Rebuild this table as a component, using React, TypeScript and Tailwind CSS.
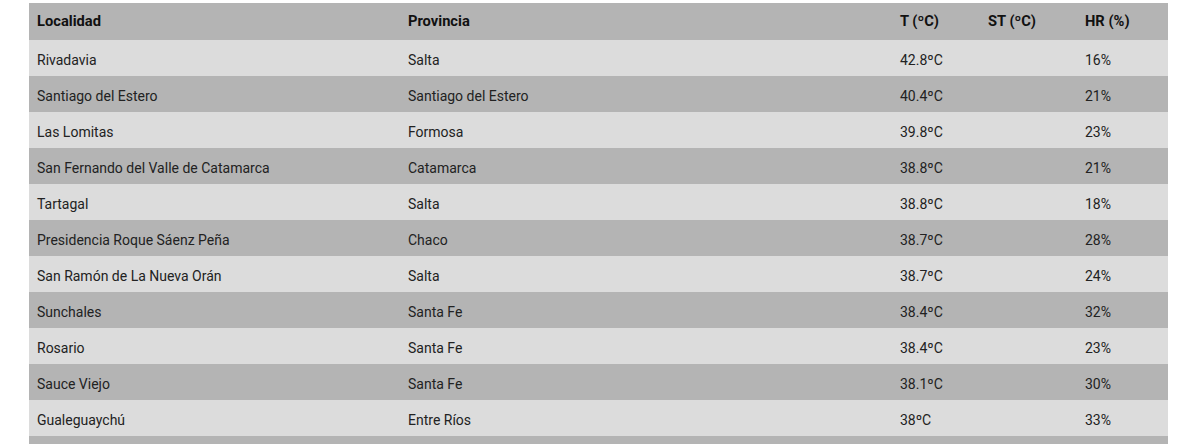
const rows = [
  ['Rivadavia', 'Salta', '42.8ºC', '', '16%'],
  ['Santiago del Estero', 'Santiago del Estero', '40.4ºC', '', '21%'],
  ['Las Lomitas', 'Formosa', '39.8ºC', '', '23%'],
  ['San Fernando del Valle de Catamarca', 'Catamarca', '38.8ºC', '', '21%'],
  ['Tartagal', 'Salta', '38.8ºC', '', '18%'],
  ['Presidencia Roque Sáenz Peña', 'Chaco', '38.7ºC', '', '28%'],
  ['San Ramón de La Nueva Orán', 'Salta', '38.7ºC', '', '24%'],
  ['Sunchales', 'Santa Fe', '38.4ºC', '', '32%'],
  ['Rosario', 'Santa Fe', '38.4ºC', '', '23%'],
  ['Sauce Viejo', 'Santa Fe', '38.1ºC', '', '30%'],
  ['Gualeguaychú', 'Entre Ríos', '38ºC', '', '33%'],
  // next row only peeks in at the bottom edge
  ['', '', '', '', ''],
];

export default function App() {
  return (
    <div className="h-[444px] overflow-hidden bg-white pt-[3px] pl-[29px] font-['Roboto',sans-serif] text-[14px] text-[#222]">
      <table className="w-[1139px] table-fixed border-collapse">
        <colgroup>
          <col className="w-[371px]" />
          <col className="w-[492px]" />
          <col className="w-[88px]" />
          <col className="w-[97px]" />
          <col className="w-[91px]" />
        </colgroup>
        <thead>
          <tr className="h-[37px] bg-[#b4b4b4] text-left text-[14.7px] text-[#111]">
            <th className="px-2 font-bold">Localidad</th>
            <th className="px-2 font-bold">Provincia</th>
            <th className="px-2 font-bold">T (ºC)</th>
            <th className="px-2 font-bold">ST (ºC)</th>
            <th className="px-2 font-bold">HR (%)</th>
          </tr>
        </thead>
        <tbody>
          {rows.map((r, i) => (
            <tr key={i} className={i % 2 === 0 ? 'h-9 bg-[#dcdcdc]' : 'h-9 bg-[#b4b4b4]'}>
              {r.map((c, j) => (
                <td key={j} className="px-2 pt-1">{c}</td>
              ))}
            </tr>
          ))}
        </tbody>
      </table>
    </div>
  );
}
